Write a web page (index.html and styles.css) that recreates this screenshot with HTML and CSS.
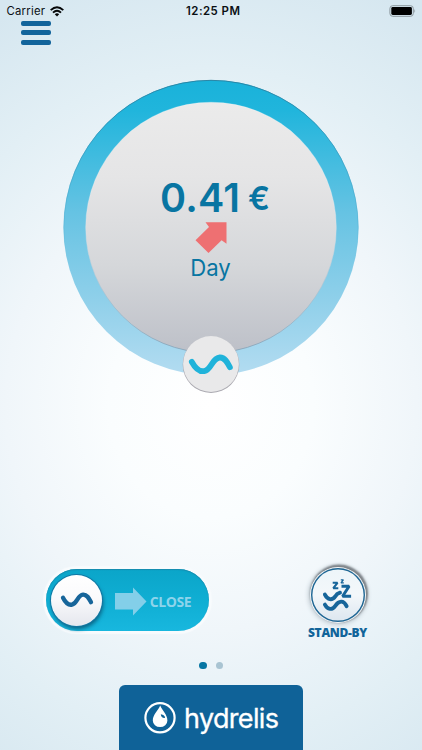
FILE: index.html
```html
<!DOCTYPE html>
<html lang="en">
<head>
<meta charset="utf-8">
<meta name="viewport" content="width=device-width">
<title>Hydrelis</title>
<link rel="stylesheet" href="styles.css">
</head>
<body>
<div class="app">
  <header class="status">
    <div class="carrier">Carrier
      <svg class="wifi" width="14" height="11" viewBox="0 0 14 11"><g fill="none" stroke="#050708" stroke-width="1.9"><path d="M.7 4.1Q7-1.7 13.3 4.1"/><path d="M3 6.6Q7 2.9 11 6.6"/></g><path d="M4.8 8.3Q7 6.4 9.2 8.3L7 10.5Z" fill="#050708"/></svg>
    </div>
    <div class="time">12:25 PM</div>
    <svg class="battery" width="28" height="12" viewBox="0 0 28 12"><rect x=".9" y=".7" width="23.4" height="10.6" rx="2.8" fill="none" stroke="#8c989e"/><rect x="2.3" y="2.1" width="20.6" height="7.8" rx="1.4" fill="#000"/><path d="M25.4 4Q27 6 25.4 8Z" fill="#8c989e"/></svg>
  </header>
  <button class="menu" aria-label="Menu"><span></span><span></span><span></span></button>
  <main>
    <svg class="gauge" width="300" height="320" viewBox="61 77 300 320">
      <defs>
        <linearGradient id="ring" x1="0" y1="0" x2="0" y2="1"><stop offset="0" stop-color="#19b2da"/><stop offset=".1" stop-color="#20b5dc"/><stop offset=".45" stop-color="#66c3e3"/><stop offset=".75" stop-color="#90d0ea"/><stop offset="1" stop-color="#b3dcf1"/></linearGradient>
        <linearGradient id="face" x1="0" y1="0" x2="0" y2="1"><stop offset="0" stop-color="#ebebeb"/><stop offset=".3" stop-color="#e5e5e6"/><stop offset=".65" stop-color="#d5d7da"/><stop offset="1" stop-color="#bdc0c8"/></linearGradient>
        <linearGradient id="rim" x1="0" y1="0" x2="0" y2="1"><stop offset="0" stop-color="#287f9f"/><stop offset=".5" stop-color="#4cacd0" stop-opacity=".4"/><stop offset=".7" stop-color="#aad9ed" stop-opacity="0"/></linearGradient>
        <linearGradient id="edge" x1="0" y1="0" x2="0" y2="1"><stop offset=".3" stop-color="#fff" stop-opacity=".3"/><stop offset="1" stop-color="#7f9eb4"/></linearGradient>
      </defs>
      <circle cx="211" cy="227.5" r="147.5" fill="url(#ring)"/>
      <circle cx="211" cy="227.5" r="147.2" fill="none" stroke="url(#rim)" stroke-width=".9"/>
      <circle cx="211" cy="227.5" r="125.3" fill="url(#face)" stroke="url(#edge)" stroke-width=".8"/>
      <text class="amount" x="160" y="212" textLength="80" lengthAdjust="spacing">0.41</text>
      <text class="currency" x="248" y="210" textLength="22" lengthAdjust="spacingAndGlyphs">€</text>
      <path d="M205.5 222.3H226.5V243.7L221.6 240.2L208.5 253L195.5 240.3L209 226.9Z" fill="#ee7072"/>
      <text class="period" x="190.3" y="275.5" textLength="40.5" lengthAdjust="spacingAndGlyphs">Day</text>
      <circle cx="211" cy="364.7" r="28.3" fill="#aaa9b0"/>
      <circle cx="211" cy="364" r="27.9" fill="#e9e9ea"/>
      <path d="M191.8 361.8C195.3 368.3 199.3 371.9 204.2 371.1C211.5 370 211.8 358 219.8 357.5C224.8 357.3 227.3 362 229.9 367.2" fill="none" stroke="#20b3da" stroke-width="5.8" stroke-linecap="round"/>
    </svg>
  </main>
  <section class="controls">
    <button class="valve">
      <span class="knob"><svg width="34" height="20" viewBox="0 0 34 20"><path d="M3 7.7C5.4 12.5 8.2 15.4 12 14.6C17.3 13.4 17.5 5 23 4.6C27 4.3 29 8.4 31 12.2" fill="none" stroke="#17659a" stroke-width="4.3" stroke-linecap="round"/></svg></span>
      <svg class="arrow" width="32" height="29" viewBox="0 0 32 29"><path d="M0 6H18V.5L31.5 14.5L18 28.5V22.5H0Z" fill="#83cfe9"/></svg>
      <span class="close">CLOSE</span>
    </button>
    <button class="standby">
      <span class="disc"><svg width="54" height="54" viewBox="310.5 568 54 54"><g fill="none" stroke="#17659a" stroke-linecap="round" stroke-width="3.9"><path d="M324.4 594.6C327.2 600 331.5 600.8 334.8 596.3Q336.2 593.6 339.5 592.7"/><path d="M324.4 604.6C327.2 609.8 331.5 610.4 334.8 605.8C338.3 600.7 343 599.6 346.1 606.2"/></g><g fill="none" stroke="#17659a"><path d="M341 586.3H348.6L342.1 596.3H350.6" stroke-width="3" stroke-linejoin="bevel"/><path d="M332.2 582.8H337L332.8 588.2H337.8" stroke-width="2.1" stroke-linejoin="bevel"/><path d="M340.3 579.8H342.9L340.5 582.8H343.3" stroke-width="1.3" stroke-linejoin="bevel"/></g></svg></span>
      <span class="label">STAND-BY</span>
    </button>
  </section>
  <div class="dots"><i class="on"></i><i></i></div>
  <footer class="brand">
    <svg width="184" height="65" viewBox="119 685 184 65">
      <circle cx="160" cy="717.8" r="14.6" fill="none" stroke="#fff" stroke-width="2.2"/>
      <path d="M160.2 705.6C158 710.7 152.8 715 152.8 720.4A7.3 6.7 0 0 0 167.4 720.4C167.4 715 162.4 710.8 160.2 705.6Z" fill="#fff"/>
      <path d="M160.8 714.3Q165 714.8 165 718Q161.2 718.4 160.8 714.3Z" fill="#0d6297"/>
      <text class="wordmark" x="184" y="727.6" textLength="95" lengthAdjust="spacing">hydrelis</text>
    </svg>
  </footer>
</div>
</body>
</html>
```
FILE: styles.css
```css
* { box-sizing: border-box; }
body { margin: 0; font-family: Inter, "Liberation Sans", sans-serif; }
button { border: 0; padding: 0; margin: 0; background: none; font: inherit; }
svg { display: block; }
.app {
  width: 422px; height: 750px; overflow: hidden;
  display: flex; flex-direction: column;
  background: radial-gradient(ellipse 410px 450px at 211px 405px, #fff 0%, #fafdfe 25%, #f0f6fa 50%, #e2eff5 75%, #d6e7f0 100%);
}
.status {
  display: grid; grid-template-columns: 1fr auto 1fr; align-items: center;
  height: 20px; padding: 2px 5px 0 6.5px; color: #0b1014; font-size: 11.3px;
}
.carrier { display: flex; align-items: center; gap: 5px; letter-spacing: .25px; }
.time { font-weight: 600; font-size: 11.4px; letter-spacing: .48px; padding-left: 3px; }
.battery { justify-self: end; margin-top: -1px; }
.menu { display: flex; flex-direction: column; gap: 4.7px; width: 30.5px; margin: .6px 0 0 20.5px; }
.menu span { height: 5px; border-radius: 2px; background: #12649b; }
main { display: flex; justify-content: center; margin-top: 32px; }
.amount { font-size: 39.5px; font-weight: 600; fill: #0875a2; }
.currency { font-size: 33px; font-weight: 600; fill: #0875a2; }
.period { font-size: 22.8px; fill: #0875a2; }
.controls { display: flex; justify-content: space-between; margin-top: 167px; padding: 0 53.5px 0 46px; height: 80px; }
.valve {
  display: flex; align-items: center; width: 162.5px; height: 62px; margin-top: 5.5px; padding-left: 5px;
  border-radius: 31px; background: linear-gradient(#0ba5c9, #10afd4 55%, #18b7de);
  box-shadow: 0 0 1px 3px #f8fbfd, inset 0 1px 1px #168caf;
}
.knob {
  display: flex; align-items: center; justify-content: center; width: 51px; height: 51px; border-radius: 50%;
  background: linear-gradient(#fff, #fafafc 45%, #e5e7ee); box-shadow: 0 0 0 1px #1575a2, 1px 3px 4px #086080;
}
.arrow { margin-left: 12.5px; margin-top: 2px; }
.close { width: 44px; margin: 2px 0 0 2px; font: 700 14px "Open Sans", sans-serif; letter-spacing: -.45px; color: #8dd4eb; }
.standby { display: flex; flex-direction: column; align-items: center; width: 62px; }
.disc {
  width: 54px; height: 54px; margin-top: 4px; border-radius: 50%;
  background: linear-gradient(#edf5f9, #f3f7fa 50%, #dce6ef);
  box-shadow: inset 0 0 0 1.4px #1d6593, 0 0 0 1px #f6f9fb, 1px -1.5px 2px 2px #7d8388, 0 0 4px 3px #c6d0d7;
}
.label { margin-top: 3.5px; font: 800 12px/16px "Open Sans", sans-serif; color: #11649a; white-space: nowrap; letter-spacing: -.3px; }
.dots { display: flex; justify-content: center; gap: 9px; margin-top: 18px; }
.dots i { width: 7.5px; height: 7.5px; border-radius: 50%; background: #a9c4d2; }
.dots .on { background: #0876a3; }
.brand { width: 184px; height: 65.5px; margin: auto auto 0; border-radius: 6px 6px 0 0; background: #0f6298; }
.wordmark { font-family: Inter, sans-serif; font-size: 27px; fill: #fff; stroke: #fff; stroke-width: .3px; }
```
